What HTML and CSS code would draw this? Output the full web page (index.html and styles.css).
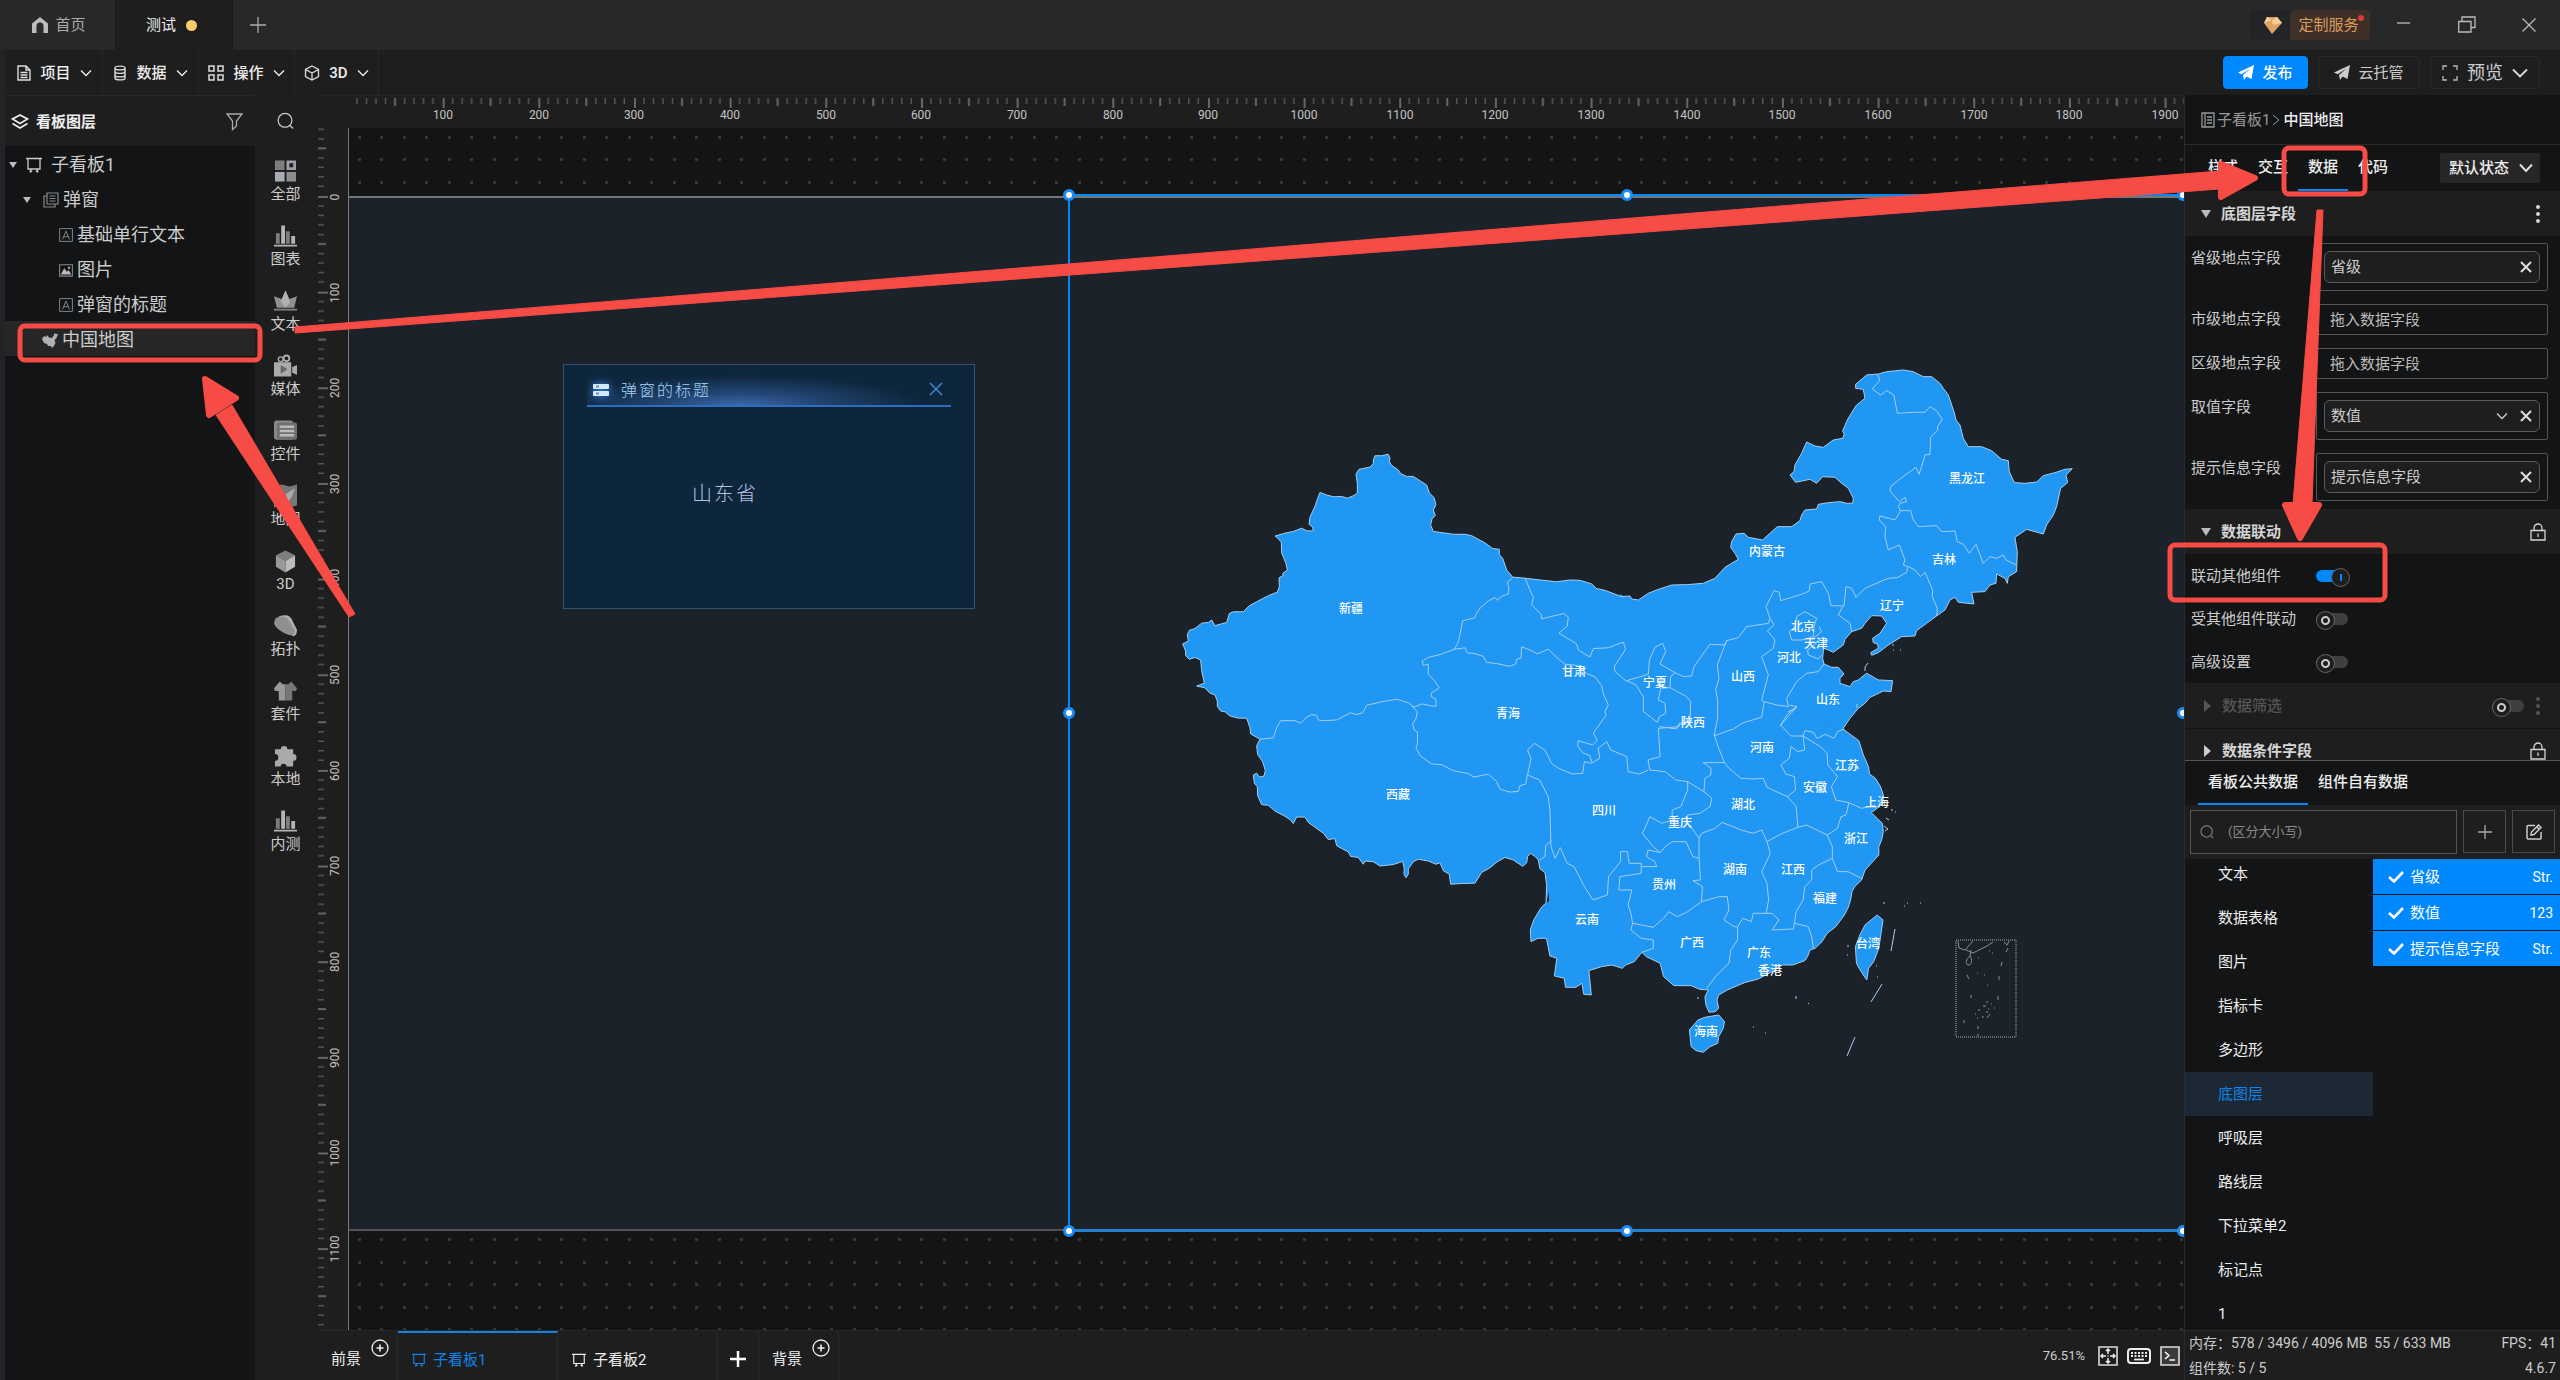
FILE: index.html
```html
<!DOCTYPE html>
<html lang="zh-CN">
<head>
<meta charset="utf-8">
<title>测试</title>
<link rel="stylesheet" href="styles.css">
</head>
<body>
<svg class="defs" aria-hidden="true">
  <symbol id="chev" viewBox="0 0 12 8"><path d="M1 1.5 6 6.5 11 1.5" fill="none" stroke="currentColor" stroke-width="1.3"/></symbol>
  <symbol id="cross" viewBox="0 0 12 12"><path d="M1 1 11 11M11 1 1 11" fill="none" stroke="currentColor" stroke-width="2"/></symbol>
  <symbol id="board" viewBox="0 0 16 16"><path d="M0 1.5H16M2 1.5V12H14V1.5M5 12 4 15.5M11 12 12 15.5M6 15 5 13.500M10 15 11 13.500" fill="none" stroke="currentColor" stroke-width="1.3"/></symbol>
  <symbol id="texticon" viewBox="0 0 16 16"><path d="M.7.7H15.300V15.300H.7ZM4 13 8 3.500 12 13M5.300 10H10.700" fill="none" stroke="currentColor" stroke-width="1.100"/></symbol>
  <symbol id="search" viewBox="0 0 18 18"><path d="M8.500 1A7.300 7.300 0 1 0 8.500 15.600 7.300 7.300 0 1 0 8.500 1M13.500 13.500 17 17" fill="none" stroke="currentColor" stroke-width="1.300"/></symbol>
  <symbol id="plane" viewBox="0 0 16 16"><path d="M0 7.500 16 0 13.500 14 8.500 11.500 6 15 5 10 12.500 3.500 3.500 9.300Z" fill="currentColor"/></symbol>
  <symbol id="lock" viewBox="0 0 16 18"><path d="M1 7.500H15V17H1ZM4 7.500V5A4 4 0 0 1 12 5V7.500M8 10.500V14" fill="none" stroke="currentColor" stroke-width="1.300"/></symbol>
  <symbol id="dots" viewBox="0 0 4 18"><path d="M2 2h.01M2 9h.01M2 16h.01" stroke="currentColor" stroke-width="4" stroke-linecap="round"/></symbol>
  <symbol id="bars" viewBox="0 0 24 24"><path d="M2 9H6V20H2ZM12.500 7H16.500V20H12.500Z" fill="#7d7d7d"/><path d="M7.500 1H11.500V20H7.500ZM18 12H22V20H18ZM0 21H24V23H0Z" fill="#b5b5b5"/></symbol>
  <symbol id="check" viewBox="0 0 16 12"><path d="M1 6 6 10.500 15 1" fill="none" stroke="currentColor" stroke-width="2.600"/></symbol>
  <symbol id="ringplus" viewBox="0 0 18 18"><circle cx="9" cy="9" r="8" fill="none" stroke="currentColor" stroke-width="1.300"/><path d="M9 5.500V12.500M5.500 9H12.500" stroke="currentColor" stroke-width="1.600"/></symbol>
</svg>

<div class="app">
  <header class="titlebar">
    <nav class="wintabs">
      <a class="wintab" href="#home"><svg class="ic16" viewBox="0 0 16 16"><path d="M8 0 16 6.500V16H11.500V9A3 3 0 0 0 4.500 9V16H0V6.500Z" fill="#bbb"/></svg>首页</a>
      <a class="wintab on" href="#test">测试<i class="unsaved"></i></a>
      <button class="newtab" aria-label="新建"><svg class="ic16" viewBox="0 0 16 16"><path d="M8 0V16M0 8H16" stroke="#aaa" stroke-width="1.300"/></svg></button>
    </nav>
    <div class="winctl">
      <button class="service"><span class="gem"><svg width="18" height="17" viewBox="0 0 18 17"><path d="M3 0 13 0 18 6 8 17 0 6Z" fill="#e0a260"/><path d="M3 0 8 3 13 0 18 6 9 8 8 3 0 6Z" fill="#f3cc98"/></svg></span><span class="service-name">定制服务</span></button>
      <button aria-label="最小化"><svg width="18" height="18" viewBox="0 0 18 18"><path d="M3 7H16" stroke="#bbb" stroke-width="1.300"/></svg></button>
      <button aria-label="还原"><svg width="18" height="18" viewBox="0 0 18 18"><path d="M.7 5.500H13V16H.7ZM4 5.500V1H17V11.500H13" fill="none" stroke="#bbb" stroke-width="1.300"/></svg></button>
      <button aria-label="关闭"><svg width="14" height="14" viewBox="0 0 14 14"><path d="M.5.5 13.500 13.500M13.500.5.5 13.500" stroke="#bbb" stroke-width="1.300"/></svg></button>
    </div>
  </header>

  <div class="menubar">
    <nav class="menus">
      <button class="menu"><svg width="14" height="16" viewBox="0 0 14 16"><path d="M1 1H9L13 5V15H1ZM9 1V5H13M3.500 7.500H10.500M3.500 10H10.500M3.500 12.500H10.500" fill="none" stroke="#ddd" stroke-width="1.400"/></svg>项目<svg class="chev" viewBox="0 0 12 8"><use href="#chev"/></svg></button>
      <button class="menu"><svg width="14" height="16" viewBox="0 0 14 16"><path d="M2 3C2 .5 12 .5 12 3V13C12 15.500 2 15.500 2 13ZM2 3C2 5.500 12 5.500 12 3M2 6.500C2 9 12 9 12 6.500M2 10C2 12.500 12 12.500 12 10" fill="none" stroke="#ddd" stroke-width="1.400"/></svg>数据<svg class="chev" viewBox="0 0 12 8"><use href="#chev"/></svg></button>
      <button class="menu"><svg width="16" height="16" viewBox="0 0 16 16"><path d="M1 1H6V6H1ZM10 1H15V6H10ZM1 10H6V15H1ZM10 10H15V15H10Z" fill="none" stroke="#ddd" stroke-width="1.500"/></svg>操作<svg class="chev" viewBox="0 0 12 8"><use href="#chev"/></svg></button>
      <button class="menu"><svg width="16" height="16" viewBox="0 0 16 16"><path d="M8 1 14.500 4.500V11.500L8 15 1.500 11.500V4.500ZM1.500 4.500 8 8 14.500 4.500M8 8V15" fill="none" stroke="#ddd" stroke-width="1.300"/></svg>3D<svg class="chev" viewBox="0 0 12 8"><use href="#chev"/></svg></button>
    </nav>
    <div class="actions">
      <button class="act primary"><svg class="ic16"><use href="#plane"/></svg>发布</button>
      <button class="act cloud"><svg class="ic16"><use href="#plane"/></svg>云托管</button>
      <button class="act preview"><svg class="ic16" viewBox="0 0 16 16"><path d="M1 5V1H5M11 1H15V5M15 11V15H11M5 15H1V11" fill="none" stroke="#bbb" stroke-width="1.300"/></svg>预览<svg width="16" height="10" viewBox="0 0 16 10"><path d="M1 1.500 8 8.500 15 1.500" fill="none" stroke="#ddd" stroke-width="1.800"/></svg></button>
    </div>
  </div>

  <main class="work">
    <aside class="layers">
      <h2><svg width="18" height="16" viewBox="0 0 18 16"><path d="M9 1 16.500 5 9 9.500 1.500 5ZM1.500 9.500 9 14 16.500 9.500" fill="none" stroke="#eee" stroke-width="1.700"/></svg>看板图层
        <button class="filter" aria-label="筛选"><svg width="17" height="18" viewBox="0 0 17 18"><path d="M1 1H16L10.500 8V13L6.500 16.500V8Z" fill="none" stroke="#aaa" stroke-width="1.300"/></svg></button></h2>
      <ul class="tree">
        <li class="lv1"><i class="tri"></i><svg class="ic16"><use href="#board"/></svg><span>子看板1</span></li>
        <li class="lv2"><i class="tri"></i><svg class="ic16" viewBox="0 0 16 16"><path d="M4 1H15V12H4ZM4 4H1V15H12V12" fill="none" stroke="#888" stroke-width="1.200"/><path d="M6.500 4H12.500M6.500 6.500H12.500M6.500 9H12.500" stroke="#888" stroke-width="1.200"/></svg><span>弹窗</span></li>
        <li class="lv3"><svg class="ic14"><use href="#texticon"/></svg><span>基础单行文本</span></li>
        <li class="lv3"><svg class="ic14" viewBox="0 0 16 16"><path d="M.7 2H15.300V15H.7Z" fill="none" stroke="#888" stroke-width="1.200"/><path d="M2 13 6 6 9 10 11 8 14 13Z" fill="#bbb"/><circle cx="11.500" cy="5.500" r="1.300" fill="#bbb"/></svg><span>图片</span></li>
        <li class="lv3"><svg class="ic14"><use href="#texticon"/></svg><span>弹窗的标题</span></li>
        <li class="lv2 map on"><svg class="ic16" viewBox="0 0 16 16"><path d="M0 7 2 4 4 5 5 3 7 5.500 10 6 12 3 12 1.500 16 2 14.500 6 12.500 8 13.500 11 12 14 9.500 16 9 14 6 14 5 12 2 11Z" fill="#b0b0b0"/></svg><span>中国地图</span></li>
      </ul>
    </aside>

    <nav class="tools">
      <button class="find" aria-label="搜索"><svg width="17" height="18"><use href="#search"/></svg></button>
      <button><svg viewBox="0 0 24 24"><path d="M1 1H11V11H1Z" fill="#7d7d7d"/><path d="M14.500 2.500H21.500V9.500H14.500Z" fill="none" stroke="#9b9fa8" stroke-width="3"/><path d="M1 13H11V23H1Z" fill="#a9adb5"/><path d="M13 13H23V23H13Z" fill="#8c8c8c"/></svg>全部</button>
      <button><svg><use href="#bars"/></svg>图表</button>
      <button><svg viewBox="0 0 24 24"><path d="M12 1 16 10 24 7 21 19H3L0 7 8 10Z" fill="#909090"/><path d="M12 1 17 13 12 19 7 13Z" fill="#b0b0b0"/><path d="M0 20H24V22H0Z" fill="#808080"/></svg>文本</button>
      <button><svg viewBox="0 0 24 24"><circle cx="7" cy="5" r="2.500" fill="none" stroke="#aaa" stroke-width="1.500"/><circle cx="13" cy="4" r="3" fill="none" stroke="#aaa" stroke-width="2"/><path d="M0 8H18V23H0ZM19 13 24 11V21L19 19Z" fill="#aaa"/><path d="M7 11 14 15.500 7 20Z" fill="#666"/></svg>媒体</button>
      <button><svg viewBox="0 0 24 24"><rect x="0" y="1" width="20" height="20" rx="3" fill="#8a8a8a"/><rect x="3" y="3" width="21" height="18" rx="2" fill="#707070"/><path d="M6 7.500H21M6 12H21M6 16.500H21" stroke="#bbb" stroke-width="2.500"/></svg>控件</button>
      <button><svg viewBox="0 0 24 24"><path d="M0 2 8 0 16 2 24 0V22L16 24 8 22 0 24Z" fill="#777"/><path d="M22 4 19 12 15 18 12 10Z" fill="#aaa"/></svg>地图</button>
      <button><svg viewBox="0 0 24 24"><path d="M12 1 22 6 12 12 2 6Z" fill="#7d7d7d"/><path d="M2 6 12 12V24L2 18Z" fill="#999"/><path d="M22 6 12 12V24L22 18Z" fill="#bbb"/></svg>3D</button>
      <button><svg viewBox="0 0 24 24"><path d="M5 2C12 0 17 0 20 8L24 16C24 20 23 22 20 23Z" fill="#b0b0b0"/><path d="M1 5C4 1 13 1 16 7L22 17C21 20 20 22 18 22C10 20 1 14 0 9Z" fill="#909090"/></svg>拓扑</button>
      <button><svg viewBox="0 0 24 24"><path d="M6 2 9 5H12V22H5V12L1 12 0 9Z" fill="#999"/><path d="M18 2 15 5H12V22H19V12L23 12 24 9Z" fill="#777"/></svg>套件</button>
      <button><svg viewBox="0 0 24 24"><path d="M1 5H7A3.500 3.500 0 0 1 14 5H20V10A3.500 3.500 0 0 1 20 17V23H13A3 3 0 0 0 7 23H1V17A3.500 3.500 0 0 0 1 10Z" fill="#aaa"/></svg>本地</button>
      <button><svg><use href="#bars"/></svg>内测</button>
    </nav>

    <section class="center">
      <svg class="hruler">
        <defs><pattern id="ht" x="29" y="0" width="95.660" height="20" patternUnits="userSpaceOnUse">
          <path d="M10 2V8M19.500 2V8M29 2V8M38.500 2V8M57.500 2V8M67 2V8M76.500 2V8M86 2V8" stroke="#555" stroke-width="1.500"/><path d="M48 2V10" stroke="#666" stroke-width="2"/><path d="M1 2V12" stroke="#666" stroke-width="2"/></pattern></defs>
        <rect class="tickrow" x="31" y="0" width="100%" height="20" fill="url(#ht)"/>
        <g class="num"><text x="125" y="23">100</text><text x="221" y="23">200</text><text x="316" y="23">300</text><text x="412" y="23">400</text><text x="508" y="23">500</text><text x="603" y="23">600</text><text x="699" y="23">700</text><text x="795" y="23">800</text><text x="890" y="23">900</text><text x="986" y="23">1000</text><text x="1082" y="23">1100</text><text x="1177" y="23">1200</text><text x="1273" y="23">1300</text><text x="1369" y="23">1400</text><text x="1464" y="23">1500</text><text x="1560" y="23">1600</text><text x="1656" y="23">1700</text><text x="1751" y="23">1800</text><text x="1847" y="23">1900</text></g>
      </svg>
      <div class="stagerow">
        <svg class="vruler">
          <defs><pattern id="vt" x="0" y="68" width="20" height="95.650" patternUnits="userSpaceOnUse">
            <path d="M0 10H6M0 19.500H6M0 29H6M0 38.500H6M0 57.500H6M0 67H6M0 76.500H6M0 86H6" stroke="#555" stroke-width="1.500"/><path d="M0 48H8" stroke="#666" stroke-width="2"/><path d="M0 1H10" stroke="#666" stroke-width="2"/></pattern></defs>
          <rect x="0" y="0" width="12" height="100%" fill="url(#vt)"/>
          <g class="num"><text transform="translate(21 69)rotate(-90)">0</text><text transform="translate(21 165)rotate(-90)">100</text><text transform="translate(21 260)rotate(-90)">200</text><text transform="translate(21 356)rotate(-90)">300</text><text transform="translate(21 451)rotate(-90)">400</text><text transform="translate(21 547)rotate(-90)">500</text><text transform="translate(21 643)rotate(-90)">600</text><text transform="translate(21 738)rotate(-90)">700</text><text transform="translate(21 834)rotate(-90)">800</text><text transform="translate(21 930)rotate(-90)">900</text><text transform="translate(21 1025)rotate(-90)">1000</text><text transform="translate(21 1121)rotate(-90)">1100</text></g>
        </svg>
        <div class="stage">
          <svg class="canvas">
            <defs><pattern id="grid" x="9" y="8" width="45" height="45" patternUnits="userSpaceOnUse"><path d="M0 0h3v3h-3zM22 0h3v3h-3zM0 22h3v3h-3zM22 22h3v3h-3z" fill="#343536"/></pattern></defs>
            <rect width="100%" height="100%" fill="url(#grid)"/>
            <rect x="0" y="69" width="100%" height="1033" fill="#1c222a"/>
            <rect x="0" y="68" width="100%" height="2" fill="#757676"/>
            <rect x="0" y="1101" width="100%" height="2" fill="#515254"/>
            <g transform="translate(-349 -128)">
              <path d="M1556 850 1620 594 1855 740 1843 732 1700 850Z" fill="#1f97f3"/>
              <g class="land">
                <path transform="translate(1160 360)scale(.3333 .3571)" d="M1380 661 1335 645 1310 640 1295 627 1260 617 1230 616 1190 621 1150 617 1095 611 1058 608 1040 588 1028 555 1018 545 1018 530 998 528 975 512 935 492 915 488 880 488 850 484 820 480 812 462 816 445 826 435 820 420 828 405 822 385 808 372 800 350 780 338 760 326 740 326 722 318 715 308 695 295 688 285 690 275 685 264 665 268 645 268 640 280 640 290 630 300 597 306 588 320 592 345 592 373 580 380 562 387 545 382 520 383 500 378 480 371 472 390 465 410 450 440 447 460 458 468 460 479 440 478 425 471 400 480 370 486 345 493 352 498 364 510 365 540 378 570 382 588 368 598 370 603 357 610 358 635 352 650 325 660 290 677 268 688 250 705 220 705 208 710 200 735 180 740 165 744 155 728 145 735 125 737 105 752 88 757 82 770 85 787 68 795 77 815 77 828 88 838 105 833 122 840 125 870 133 905 110 913 135 918 150 933 165 938 172 955 172 970 182 983 195 985 210 997 235 1003 260 1003 270 1030 272 1047 300 1062 290 1080 293 1105 308 1125 316 1150 312 1165 298 1168 290 1157 280 1162 283 1185 292 1195 293 1220 305 1245 325 1247 345 1263 375 1278 390 1287 400 1298 410 1280 435 1280 445 1295 490 1325 505 1343 525 1340 530 1360 565 1378 572 1390 595 1393 610 1412 615 1403 640 1405 660 1417 700 1413 728 1404 733 1425 732 1440 738 1450 745 1440 745 1425 760 1405 775 1398 805 1403 828 1412 840 1408 850 1430 868 1440 872 1468 905 1466 945 1465 965 1435 990 1422 1012 1405 1035 1393 1060 1400 1088 1418 1100 1408 1103 1390 1112 1382 1125 1390 1135 1400 1140 1425 1155 1435 1160 1470 1158 1525"/>
                <path transform="translate(1620 360)scale(.3333)" d="M0 710 30 708 35 717 55 720 85 700 110 690 155 675 200 674 250 670 285 655 315 622 355 598 345 580 332 562 335 545 348 522 372 520 385 532 428 540 450 520 472 500 515 500 540 482 545 465 555 450 590 447 595 433 625 428 660 425 680 430 698 430 700 415 685 385 665 370 645 352 608 350 590 370 570 358 527 367 510 345 522 335 525 315 545 280 560 246 585 258 610 262 640 240 668 235 673 222 668 213 682 180 700 150 710 135 735 115 730 88 707 85 707 73 740 45 775 42 800 35 850 30 880 35 910 50 935 50 960 70 970 85 985 105 1002 155 1008 180 1020 195 1030 235 1045 260 1085 260 1115 272 1145 298 1165 302 1168 335 1183 368 1215 370 1250 366 1270 347 1305 338 1335 328 1357 326 1338 345 1343 368 1322 385 1310 440 1300 465 1280 495 1270 522 1220 508 1185 532 1192 575 1190 635 1165 650 1162 670 1155 655 1130 642 1128 670 1110 675 1095 695 1055 697 1062 732 1015 727 1005 712 990 720 975 750 950 768 920 790 890 812 885 828 845 830 805 855 775 878 755 886 752 878 775 865 773 852 760 848 758 835 780 820 800 790 785 768 755 767 735 790 725 805 695 815 675 838 670 855 640 877 625 870 612 865 610 875 608 895 612 912 635 922 655 922 672 942 660 955 660 970 690 980 700 965 715 960 740 940 775 960 818 962 813 995 790 993 770 1003 750 1012 735 1030 715 1045 690 1075 670 1105 680 1125"/>
                <g transform="translate(1500 700)scale(.3444 .3333)">
                  <path d="M997 88 1042 122 1055 165 1070 200 1073 222 1090 235 1105 260 1113 285 1112 310 1095 325 1078 338 1095 355 1110 370 1113 395 1108 420 1100 440 1100 465 1078 490 1060 510 1050 540 1030 560 1022 575 1018 600 1010 625 1000 645 975 680 950 700 935 725 915 745 900 750 893 770 885 782 850 795 820 795 790 815 750 837 710 848 660 870 635 885 630 900 635 925 625 935 607 937 598 915 595 890 605 870 580 868 555 857 505 857 475 830 465 790 425 770 412 757 390 785 365 795 355 805 325 795 295 800 258 812 265 885 243 883 238 850 220 862 190 862 187 835 158 828 165 775 145 768 135 715 110 715 90 725 88 690 98 660 118 625 132 610"/>
                  <path d="M595 952 635 945 652 965 648 985 635 1010 632 1030 610 1040 590 1057 570 1052 555 1040 550 990 575 960Z"/>
                  <path d="M1095 645 1112 660 1105 710 1100 745 1085 785 1070 805 1065 840 1055 825 1040 800 1035 790 1032 740 1045 705 1060 675Z"/>
                </g>
              </g>
              <path d="M1549 902 1549 860 1640 780 1835 735 1700 850Z" fill="#1f97f3"/>
              <g class="border">
                <path transform="translate(1160 360)scale(.3333 .3571)" d="M1058 610 1042 622 1047 640 1045 655 1025 662 1012 673 1005 665 985 675 962 693 948 712 945 722 908 730 903 755 895 790 883 810 840 825 805 833 787 843 790 855 805 852 805 880 825 900 838 918 815 932 813 942 828 950 828 970 810 968 785 963 762 972 745 960 712 950 665 957 620 967 608 988 590 993 572 988 530 1008 490 1010 475 1008 470 995 455 993 440 1000 422 1017 405 1010 362 1010 350 1030 340 1058 300 1062M755 968 772 985 768 1005 758 1018 762 1035 772 1042 773 1075 768 1085 780 1108 815 1131 845 1133 880 1150 925 1158 940 1168 985 1160 1010 1180 1020 1202 1050 1210 1075 1208 1080 1192 1097 1188 1102 1162M883 810 915 806 922 820 945 822 970 830 980 847 1010 850 1050 858 1068 850 1070 838 1083 835 1085 803 1110 812 1132 823 1165 810 1195 837 1215 852 1250 855 1280 878 1305 887 1325 912 1330 935 1345 965 1335 985 1338 995 1300 1045 1312 1065 1298 1078 1255 1066 1253 1080 1268 1100 1290 1108 1295 1125M1095 611 1120 665 1115 685 1143 712 1145 725 1175 718 1212 710 1225 720 1222 745 1197 765 1250 795 1255 812 1290 832 1300 808 1345 806 1390 790 1397 810 1363 858 1365 872 1400 900M1175 1345 1157 1360 1155 1390 1140 1400"/>
                <path transform="translate(1620 360)scale(.3333)" d="M772 43 780 60 757 87 782 105 800 92 822 105 832 160 880 157 915 157 930 140 950 153 967 178 953 200 953 210 932 232 930 283 915 285 905 320 897 343 888 322 845 353 812 380 810 393 838 425 855 412 860 425 840 430 835 440 842 452 872 452 880 480 895 500 950 497 965 515 1005 513 1012 545 1030 553 1048 580 1068 553 1090 610 1110 590 1130 595 1150 585 1158 600 1190 615M842 452 825 480 780 468 778 480 797 500 795 530 805 570 838 555 855 600 850 615 865 620 885 630 902 650 915 637 938 690 937 710 952 745 950 768M863 622 860 637 832 653 805 655 765 672 735 685 708 712 695 685 678 680 672 738 633 737 625 700 605 665 570 672 568 693 545 703 482 722 478 697 462 692 438 740 450 775 445 790 380 800 355 833 320 842 303 885 292 915 297 955 287 990 293 1020 293 1075 282 1128M668 740 655 765 690 790 695 815M450 775 462 795 442 812 465 840 460 865 425 890 445 945 425 1020 432 1028 425 1072 370 1088 340 1107 282 1128M555 755 590 775 582 800 580 830 545 840 515 840 508 815 525 800 530 770ZM597 800 605 815 580 835M600 840 563 870 565 885 595 897 605 885M320 842 315 855 270 853 222 920 215 948 190 950 165 938 120 912 137 875 128 850 105 862 88 900 85 943 20 962 48 975 70 1010 70 1055 112 1087 118 1070 137 1060 135 1030 115 1020 122 985 150 983 152 950 165 938M150 983 200 1010 212 1025 210 1085 175 1095 170 1107 118 1100M612 912 595 935 560 940 530 965 500 1015 505 1040 470 1035 432 1025M505 1055 530 1042 480 1098"/>
                <path transform="translate(1500 700)scale(.3444 .3333)" d="M840 15 862 20 835 42 815 75 845 108 880 108 885 92 910 97 920 115 945 103 970 115 980 95 997 88M880 108 885 150 865 155 845 140 840 175 815 195 830 222 855 230 858 270 835 290M880 108 930 140 950 160 952 195 980 230 962 260 975 300 1013 308M622 105 635 145 652 188 665 205 700 235 735 237 765 235 775 262 835 290 860 320 865 382 820 400 775 425 760 390 735 400 700 390 645 367 625 385 585 400 578 415M652 188 590 188 613 205 612 225 595 235 592 275 545 245 510 240 480 215 435 210 430 180 465 170 463 140 460 85 520 80 520 70 545 65M430 210 405 222 372 215 368 170 322 150 310 125 285 145 290 175 265 190 245 185 240 220 210 222 170 205 150 190 130 150 100 130 80 150 90 175 80 225M545 245 545 270 525 320 500 330 500 360 470 370 435 350 425 375 413 400 445 440 465 458 480 440 500 425 540 425 560 470 578 475 578 415 540 360 545 345 580 340 610 320 615 295 592 275M865 382 890 375 920 390 950 405 980 385 990 350 1005 345 1013 308 1050 325 1090 315M950 405 965 440 965 475 980 515 1010 515 1050 535M965 475 925 495 905 510 905 540 885 560 880 600 860 635 855 670 852 687 790 690 810 660 790 640 773 640 735 640 730 665 705 655 690 680M855 670 895 680 905 710 910 745M775 425 785 460 760 515 775 550 780 600 773 640M578 475 582 540 560 542 588 560 585 605 635 590 660 590 665 630 650 660 680 680 690 680 690 720 670 750 665 790 630 825 600 865M585 605 545 635 515 650 490 635 475 655 445 682 385 670 380 640 372 615 383 570 345 570 348 530 410 520 410 490 375 490 370 455 350 455 350 485 315 530 312 585 270 600 245 560 215 500 195 490 175 443 160 475 148 440 145 330 140 290 115 240 80 225M410 500 455 500 450 485 425 470 430 450 465 458M385 670 380 690 410 715 445 720 445 745 412 757"/>
                <path d="M1895 929 1891 951M1882 984 1871 1002M1855 1037 1847 1056"/>
                <path d="M1891 810h2M1895 812h1M1886 818l3 2M1884 826l4 3-3 2M1884 902v2M1904 906h1M1907 903h1M1920 903h1M1847 946h2M1847 955h1M1876 966h1M1877 977h1M1808 1003l1 1M1796 996v3M1753 1027h1M1765 1033h1M1697 998h2M1892 645h2M1893 650h1M1900 650h1M1868 663l-3 4v4M1857 704v4" />
              </g>
              <rect class="inset" x="1956" y="940" width="60" height="97"/>
              <path class="bits" d="M1958 941l1 7 6 2 8-9M1966 950l7 3 14-7 6-4M1971 950l-1 6M1970 956c-4 3-5 8-2 9s5-5 2-9M2004 942l3 3 2-4M2008 948l-2 4M2002 962l-1 4M1967 975l2 4M1999 976v4M1971 995v3M1998 996v4M1990 1014l-3 4M1964 1020v3M1977 973h1M1984 975h1M1987 985h1M1978 958h1M1989 951h1M1992 953h1M1986 1002h2M1991 1004h1M1983 1006h3M1994 1008h1M1978 1010h2M1986 1012h2M1975 1014h1M1982 1017h2M1977 1018h1M1988 1009h1M1978 1026v3M1977 1035h2"/>
              <g class="prov"><text x="1351" y="613">新疆</text><text x="1398" y="799">西藏</text><text x="1508" y="718">青海</text><text x="1574" y="676">甘肃</text><text x="1604" y="815">四川</text><text x="1767" y="556">内蒙古</text><text x="1967" y="483">黑龙江</text><text x="1944" y="564">吉林</text><text x="1892" y="610">辽宁</text><text x="1803" y="631">北京</text><text x="1816" y="648">天津</text><text x="1789" y="662">河北</text><text x="1743" y="681">山西</text><text x="1655" y="687">宁夏</text><text x="1693" y="727">陕西</text><text x="1828" y="704">山东</text><text x="1762" y="752">河南</text><text x="1847" y="770">江苏</text><text x="1815" y="792">安徽</text><text x="1877" y="807">上海</text><text x="1856" y="843">浙江</text><text x="1743" y="809">湖北</text><text x="1680" y="827">重庆</text><text x="1735" y="874">湖南</text><text x="1793" y="874">江西</text><text x="1825" y="903">福建</text><text x="1664" y="889">贵州</text><text x="1587" y="924">云南</text><text x="1692" y="947">广西</text><text x="1759" y="957">广东</text><text x="1770" y="975">香港</text><text x="1868" y="948">台湾</text><text x="1706" y="1036">海南</text></g>
            </g>
          </svg>

          <div class="popup">
            <div class="popup-head">
              <svg class="server" width="16" height="13" viewBox="0 0 16 13"><rect width="16" height="5" rx="1" fill="#d5eaff"/><rect y="7" width="16" height="5" rx="1" fill="#d5eaff"/><path d="M3 2.500H6M3 9.500H6" stroke="#6d94bb" stroke-width="2"/></svg>
              <h3>弹窗的标题</h3>
              <button aria-label="关闭弹窗"><svg width="14" height="14" viewBox="0 0 14 14"><path d="M1 1 13 13M13 1 1 13" stroke="#3c87d8" stroke-width="1.500"/></svg></button>
            </div>
            <p>山东省</p>
          </div>

          <div class="selection"><i class="h nw"></i><i class="h n"></i><i class="h ne"></i><i class="h w"></i><i class="h e"></i><i class="h sw"></i><i class="h s"></i><i class="h se"></i></div>
        </div>
      </div>

      <footer class="boards">
        <div class="cell ground">前景<button aria-label="添加前景"><svg width="18" height="18"><use href="#ringplus"/></svg></button></div>
        <a class="cell boardtab on" href="#b1"><svg class="ic14"><use href="#board"/></svg>子看板1</a>
        <a class="cell boardtab" href="#b2"><svg class="ic14"><use href="#board"/></svg>子看板2</a>
        <button class="cell addboard" aria-label="添加看板"><svg class="ic16" viewBox="0 0 16 16"><path d="M8 0V16M0 8H16" stroke="#fff" stroke-width="2.500"/></svg></button>
        <div class="cell ground">背景<button aria-label="添加背景"><svg width="18" height="18"><use href="#ringplus"/></svg></button></div>
        <div class="viewctl">
          <span>76.51%</span>
          <button aria-label="适应"><svg width="20" height="20" viewBox="0 0 20 20"><path d="M1 1H19V19H1Z" fill="none" stroke="#ddd" stroke-width="1.600"/><path d="M10 3V8M10 12V17M3 10H8M12 10H17M8 5 10 3 12 5M8 15 10 17 12 15M5 8 3 10 5 12M15 8 17 10 15 12M10 9.500V10.500" fill="none" stroke="#eee" stroke-width="1.500"/></svg></button>
          <button aria-label="键盘"><svg width="24" height="16" viewBox="0 0 24 16"><rect x="1" y="1" width="22" height="14" rx="3" fill="none" stroke="#eee" stroke-width="2"/><path d="M4 5H20M4 8H20" stroke="#eee" stroke-width="1.800" stroke-dasharray="2 1.500"/><path d="M7 11.500H17" stroke="#eee" stroke-width="1.800"/></svg></button>
          <button aria-label="控制台"><svg width="20" height="20" viewBox="0 0 20 20"><path d="M1 1H19V19H1Z" fill="#3a3a3a" stroke="#ddd" stroke-width="1.600"/><path d="M5 6 9 9.500 5 13M9.500 14H15" fill="none" stroke="#fff" stroke-width="1.600"/></svg></button>
        </div>
      </footer>
    </section>

    <aside class="props">
      <nav class="crumbs"><svg width="14" height="16" viewBox="0 0 14 16"><path d="M1 1H13V15H1ZM4 1V15M6 5H11M6 8H11M6 11H11" fill="none" stroke="#999" stroke-width="1.300"/></svg><a href="#b1">子看板1</a><svg width="9" height="14" viewBox="0 0 9 14"><path d="M1 2 7 7 1 12" fill="none" stroke="#999"/></svg><b>中国地图</b></nav>
      <div class="tabs"><button>样式</button><button>交互</button><button class="on">数据</button><button>代码</button>
        <select aria-label="状态"><option>默认状态</option></select></div>

      <div class="scroll">
        <h3 class="sec"><i class="tri"></i>底图层字段<svg class="more" viewBox="0 0 4 18"><use href="#dots"/></svg></h3>
        <div class="fields">
          <div class="field"><span>省级地点字段</span><div class="slot"><div class="chip">省级<button aria-label="移除省级"><svg width="12" height="12"><use href="#cross"/></svg></button></div></div></div>
          <div class="field"><label for="city">市级地点字段</label><input id="city" type="text" placeholder="拖入数据字段"></div>
          <div class="field"><label for="dist">区级地点字段</label><input id="dist" type="text" placeholder="拖入数据字段"></div>
          <div class="field"><span>取值字段</span><div class="slot"><div class="chip">数值<svg class="chev" viewBox="0 0 12 8"><use href="#chev"/></svg><button aria-label="移除数值"><svg width="12" height="12"><use href="#cross"/></svg></button></div></div></div>
          <div class="field"><span>提示信息字段</span><div class="slot"><div class="chip">提示信息字段<button aria-label="移除提示信息字段"><svg width="12" height="12"><use href="#cross"/></svg></button></div></div></div>
        </div>
        <h3 class="sec"><i class="tri"></i>数据联动<svg class="lock" viewBox="0 0 16 18"><use href="#lock"/></svg></h3>
        <div class="switches">
          <div><label for="s1">联动其他组件</label><input class="switch" id="s1" type="checkbox" checked></div>
          <div><label for="s2">受其他组件联动</label><input class="switch" id="s2" type="checkbox"></div>
          <div><label for="s3">高级设置</label><input class="switch" id="s3" type="checkbox"></div>
        </div>
        <h3 class="sec dim"><i class="tri side"></i><label for="s4">数据筛选</label><input class="switch" id="s4" type="checkbox"><svg class="more" viewBox="0 0 4 18"><use href="#dots"/></svg></h3>
        <h3 class="sec cut"><i class="tri side"></i>数据条件字段<svg class="lock" viewBox="0 0 16 18"><use href="#lock"/></svg></h3>
      </div>

      <div class="tabs datatabs"><button class="on">看板公共数据</button><button>组件自有数据</button></div>
      <div class="searchrow">
        <label class="searchbox"><svg width="14" height="14" viewBox="0 0 18 18"><use href="#search"/></svg><input type="text" aria-label="搜索数据" placeholder="(区分大小写)"></label>
        <button aria-label="添加数据"><svg class="ic14" viewBox="0 0 14 14"><path d="M7 0V14M0 7H14" stroke="#aaa" stroke-width="1.300"/></svg></button>
        <button aria-label="编辑数据"><svg class="ic16" viewBox="0 0 16 16"><path d="M9 1.500H3A1.500 1.500 0 0 0 1 3V13.500A1.500 1.500 0 0 0 3 15H13A1.500 1.500 0 0 0 15 13V8M5 11 5.500 8 12.500 1 15 3.500 8 10.500ZM11 3 13 5.500" fill="none" stroke="#ccc" stroke-width="1.500"/></svg></button>
      </div>
      <div class="data">
        <ul class="sources"><li>文本</li><li>数据表格</li><li>图片</li><li>指标卡</li><li>多边形</li><li class="on">底图层</li><li>呼吸层</li><li>路线层</li><li>下拉菜单2</li><li>标记点</li><li>1</li></ul>
        <ul class="cols">
          <li><svg width="16" height="12"><use href="#check"/></svg>省级<em>Str.</em></li>
          <li><svg width="16" height="12"><use href="#check"/></svg>数值<em>123</em></li>
          <li><svg width="16" height="12"><use href="#check"/></svg>提示信息字段<em>Str.</em></li>
        </ul>
      </div>
      <footer class="status">
        <div><span>内存：578 / 3496 / 4096 MB&nbsp; 55 / 633 MB</span><span>FPS：41</span></div>
        <div><span>组件数: 5 / 5</span><span>4.6.7</span></div>
      </footer>
    </aside>
  </main>

  <svg class="notes" aria-hidden="true">
    <g fill="none" stroke="#f74b45" stroke-width="5">
      <rect x="20" y="326" width="240" height="34" rx="5"/>
      <rect x="2284" y="148" width="81" height="46" rx="5"/>
      <rect x="2170" y="545" width="215" height="55" rx="5"/>
    </g>
    <g fill="#f74b45" stroke="#f74b45" stroke-linejoin="round">
      <path d="M349 617 355 614 232 405 216 415Z"/>
      <path d="M205 379 236 398 209 415Z" stroke-width="6"/>
      <path d="M295 327 295 333 1780 222 2220 189 2220 171 1780 206Z"/>
      <path d="M2221 164 2255 178 2221 197Z" stroke-width="6"/>
      <path d="M2317 210H2323L2312 504H2293Z"/>
      <path d="M2285 505H2319L2300 538Z" stroke-width="6"/>
    </g>
  </svg>
</div>
</body>
</html>
```
FILE: styles.css
```css
* { box-sizing: border-box; }
body { margin: 0; background: #1e1e1e; color: #ccc; font: 15px/20px Roboto, "Noto Sans CJK SC", sans-serif; }
button, input, select { font: inherit; color: inherit; }
button { display: flex; align-items: center; justify-content: center; margin: 0; padding: 0; border: 0; background: none; white-space: nowrap; }
a { color: inherit; text-decoration: none; }
ul, h2, h3, p { margin: 0; padding: 0; list-style: none; font-weight: 400; font-size: 15px; }
svg { display: block; flex: none; }
.defs { position: absolute; width: 0; height: 0; }
.ic16 { width: 16px; height: 16px; }
.ic14 { width: 14px; height: 14px; }
.chev { width: 12px; height: 8px; }
.app { position: relative; display: flex; flex-direction: column; height: 100vh; overflow: hidden; }

.titlebar { flex: none; display: flex; justify-content: space-between; height: 50px; background: #282828; }
.wintabs { display: flex; }
.wintab { display: flex; align-items: center; justify-content: center; gap: 7px; width: 116px; padding-left: 3px; border-right: 1px solid #191919; color: #aaa; }
.wintab.on { width: 117px; gap: 10px; justify-content: flex-start; padding-left: 30px; background: #1e1e1e; color: #eee; }
.unsaved { width: 11px; height: 11px; border-radius: 50%; background: #ffcb6b; }
.newtab { width: 50px; }
.winctl { display: flex; align-items: center; padding-right: 24px; gap: 46px; }
.service { height: 30px; border-radius: 3px; overflow: hidden; margin-right: -22px; background: #232428; }
.gem { display: flex; justify-content: center; width: 40px; padding-left: 6px; }
.service-name { position: relative; height: 30px; width: 80px; padding-right: 3px; line-height: 30px; background: #3f3027; color: #dc9c5e; border-radius: 6px 0 0 0; }
.service-name::after { content: ""; position: absolute; right: 6px; top: 5px; width: 6px; height: 6px; border-radius: 50%; background: #e03c3c; }

.menubar { flex: none; display: flex; justify-content: space-between; height: 45px; border-left: 5px solid #222328; background: #1e1e1e; }
.menus { display: flex; padding-left: 2px; }
.menu { gap: 9px; width: 96px; border-right: 1px solid #262626; color: #eee; font-weight: 500; }
.menu:last-child { width: 84px; }
.actions { display: flex; align-items: center; gap: 10px; padding-right: 20px; }
.act { gap: 8px; height: 33px; border: 1px solid #292929; border-radius: 4px; color: #ccc; }
.act.primary { width: 85px; border-color: #08f; background: #08f; color: #fff; font-weight: 500; }
.act.cloud { width: 102px; }
.act.preview { width: 110px; font-size: 18px; gap: 9px; }

.work { flex: 1; min-height: 0; display: grid; grid-template-columns: 255px 63px minmax(0, 1fr) 376px; grid-template-rows: minmax(0, 1fr); }
.layers { border-left: 5px solid #222328; background: #131415; }
.layers h2 { display: flex; align-items: center; gap: 7px; height: 51px; padding: 2px 12px 0 6px; border-top: 1px solid #282828; background: #1e1e1e; color: #eee; font-weight: 700; }
.filter { margin-left: auto; }
.tree li { display: flex; align-items: center; height: 35px; padding-top: 3px; gap: 9px; font-size: 18px; color: #ccc; }
.tri { width: 0; height: 0; border: 5px solid transparent; border-top: 7px solid #bbb; border-bottom: 0; }
.tree .tri { border-width: 6px 4px 0; }
.tree .lv1 { padding-left: 4px; gap: 9px; }
.tree .lv2 { padding-left: 18px; gap: 4px; }
.tree .lv2 .ic16 { margin-left: 8px; }
.tree .lv3 { padding-left: 54px; gap: 4px; color: #ccc; }
.tree .lv3 svg { color: #888; }
.tree .map { padding-left: 29px; background: #262626; }

.tools { display: flex; flex-direction: column; align-items: center; background: #1e1e1e; padding-right: 2px; }
.tools button { flex: none; flex-direction: column; gap: 1px; height: 65px; width: 61px; color: #ccc; }
.tools button svg { width: 23px; height: 24px; }
.tools .find { height: 54px; padding-bottom: 3px; }
.tools .find svg { width: 17px; height: 18px; }

.center { display: flex; flex-direction: column; min-height: 0; }
.hruler { width: 100%; height: 33px; border-top: 1px solid #262626; background: #1e1e1e; }
.stagerow { flex: 1; display: flex; min-height: 0; }
.vruler { width: 30px; height: 100%; }
.num { fill: #c4c4c4; font-size: 12px; text-anchor: middle; }
.stage { position: relative; flex: 1; overflow: hidden; border-left: 1px solid #7a7a7a; background: #131416; }
.canvas { position: absolute; left: 0; top: 0; width: 100%; height: 100%; }
.land path { fill: #1f97f3; stroke: #a5cdee; stroke-width: 1; vector-effect: non-scaling-stroke; stroke-linejoin: round; }
.border path { fill: none; stroke: #a5cdee; stroke-width: 1; vector-effect: non-scaling-stroke; stroke-linejoin: round; }
.inset { fill: none; stroke: #aaa; stroke-dasharray: 1 1; }
.bits { fill: none; stroke: #8b9096; }
.prov { fill: #fff; font-size: 12px; font-weight: 500; text-anchor: middle; }
.popup { position: absolute; left: 214px; top: 236px; width: 412px; height: 245px; padding: 5px 23px; border: 1px solid #35536f; background: #0e263c; }
.popup-head { display: flex; align-items: center; height: 37px; padding: 6px 8px 0 6px; border-bottom: 2px solid #2f6cc0; background: radial-gradient(ellipse 50% 85% at 42% 100%, #3a66ab, #20436f 45%, transparent 100%); }
.server { filter: drop-shadow(0 0 4px #3f8fff); }
.popup h3 { flex: 1; padding-left: 12px; font-size: 16px; font-weight: 300; letter-spacing: 2px; color: #a3d5f6; }
.popup button { margin-bottom: 4px; }
.popup p { padding: 73px 0 0 105px; font-size: 20px; line-height: 28px; font-weight: 300; letter-spacing: 2px; color: #b4c2e0; }
.selection { position: absolute; left: 719px; top: 66px; right: -2px; height: 1038px; border: 2px solid #08f; border-bottom: 3px solid #2580ce; }
.h { position: absolute; width: 12px; height: 12px; margin: -6px; border: 3px solid #1a8cf5; border-radius: 50%; background: #fff; }
.nw, .w, .sw { left: -1px; }
.n, .s { left: 50%; }
.ne, .e, .se { right: 1px; }
.nw, .n, .ne { top: -1px; }
.w, .e { top: 50%; }
.sw, .s, .se { bottom: -2px; }

.boards { flex: none; display: flex; height: 50px; border-top: 1px solid #272727; background: #1e1e1e; color: #eee; font-size: 15px; }
.cell { display: flex; align-items: center; border-right: 1px solid #292929; padding-top: 6px; }
.ground { width: 80px; padding-left: 13px; gap: 10px; }
.ground button { margin-bottom: 22px; }
.boardtab { width: 160px; padding-left: 14px; gap: 7px; border-top: 2px solid transparent; }
.boardtab.on { border-top-color: #0f83ea; color: #0f83ea; }
.addboard { width: 41px; }
.viewctl { display: flex; align-items: center; gap: 9px; margin-left: auto; padding-right: 4px; font-size: 13px; color: #ccc; }
.viewctl span { padding-right: 4px; }

.props { display: flex; flex-direction: column; min-height: 0; border-left: 1px solid #2a2a2a; background: #131415; }
.props > * { flex: none; }
.crumbs { display: flex; align-items: center; gap: 2px; height: 50px; padding-left: 16px; border-bottom: 1px solid #2a2a2a; color: #999; }
.crumbs b { font-weight: 500; color: #eee; }
.tabs { display: flex; height: 46px; padding-left: 13px; color: #eee; }
.tabs button { width: 50px; border-bottom: 2px solid transparent; font-weight: 500; }
.tabs .on { border-color: #08f; }
.tabs select { width: 100px; height: 30px; margin: 8px 20px 0 auto; padding: 0 9px; border: 0; border-radius: 2px; appearance: none; font-weight: 500; color: #eee; background: #262626 url("data:image/svg+xml,%3Csvg xmlns='http://www.w3.org/2000/svg' width='14' height='10'%3E%3Cpath d='M1 1.500 7 8 13 1.500' fill='none' stroke='%23ddd' stroke-width='2'/%3E%3C/svg%3E") no-repeat right 7px center; }
.sec { display: flex; align-items: center; height: 45px; padding: 0 14px 0 16px; background: #1e1e1e; color: #d5d5d5; font-weight: 700; }
.sec .tri { margin-right: 10px; border-width: 8px 5px 0; }
.sec .tri.side { margin: 0 11px 0 3px; border: 6px solid transparent; border-left: 7px solid #ccc; border-right: 0; }
.more { width: 4px; height: 18px; margin: 0 6px 0 auto; }
.lock { width: 16px; height: 18px; margin-left: auto; }
.sec.dim { color: #555; font-weight: 500; }
.sec.dim .tri { border-left-color: #555; }
.sec.dim .switch { margin-left: auto; }
.sec.dim .more { margin-left: 12px; }
.sec.cut { height: 32px; padding-top: 12px; border-top: 1px solid #131415; }
.scroll { overflow: hidden; border-bottom: 1px solid #555; }
.fields { display: flex; flex-direction: column; gap: 13px; padding: 7px 12px 8px 6px; }
.field { display: flex; justify-content: space-between; line-height: 30px; }
.field > span, .field > label { height: 30px; }
.field > input, .slot { width: 232px; border: 1px solid #555; border-radius: 2px; background: none; }
.field > input { height: 31px; padding: 0 13px; }
input::placeholder { color: #bbb; opacity: 1; }
.slot { padding: 7px; }
.chip { display: flex; align-items: center; gap: 12px; height: 32px; padding: 0 7px 0 6px; border: 1px solid #5a5a5a; border-radius: 6px; background: #1e1e1e; }
.chip button { color: #ddd; }
.chip :nth-last-child(2), .chip :only-child { margin-left: auto; }
.switches div { display: flex; align-items: center; height: 43px; padding-left: 6px; }
.switches label { width: 125px; }
.switch { position: relative; appearance: none; width: 32px; height: 12px; margin: 0; border-radius: 6px; background: #3d3f40; }
.switch::before { content: ""; position: absolute; left: 0; top: -2px; width: 17px; height: 17px; border: 1px solid #666; border-radius: 50%; background: radial-gradient(circle, #1e1e1e 2px, #ccc 3px, #ccc 4px, #1e1e1e 5px); }
.switch:checked { background: #08f; }
.switch:checked::before { left: 15px; background: linear-gradient(#08f, #08f) center / 2px 7px no-repeat #1e1e1e; }
.datatabs { height: 44px; }
.datatabs button { width: 110px; }
.searchrow { display: flex; gap: 6px; height: 54px; padding: 5px; background: #1e1e1e; }
.searchbox { flex: 1; display: flex; align-items: center; height: 44px; gap: 14px; padding-left: 9px; border: 1px solid #555; color: #888; font-size: 13px; }
.searchbox input { flex: 1; min-width: 0; border: 0; padding: 0; background: none; outline: 0; }
.searchbox input::placeholder { color: #8a8a8a; }
.searchrow button { width: 43px; height: 43px; border: 1px solid #4a4a4a; }
.props .data { flex: 1; min-height: 0; display: grid; grid-template-columns: 188px 1fr; overflow: hidden; }
.sources { margin-top: -7px; color: #eee; }
.sources li { height: 44px; padding-left: 33px; line-height: 44px; }
.sources .on { background: #1c2833; color: #0f83ea; }
.cols li { display: flex; align-items: center; gap: 6px; height: 35px; margin-bottom: 1px; padding: 0 7px 0 15px; background: #08f; color: #fff; }
.cols em { margin-left: auto; font-style: normal; font-size: 14px; }
.status { height: 50px; padding: 0 4px; border-top: 1px solid #2a2a2a; background: #1e1e1e; font-size: 14px; line-height: 25px; }
.status div { display: flex; justify-content: space-between; }
.notes { position: absolute; left: 0; top: 0; width: 100%; height: 100%; pointer-events: none; }
```
